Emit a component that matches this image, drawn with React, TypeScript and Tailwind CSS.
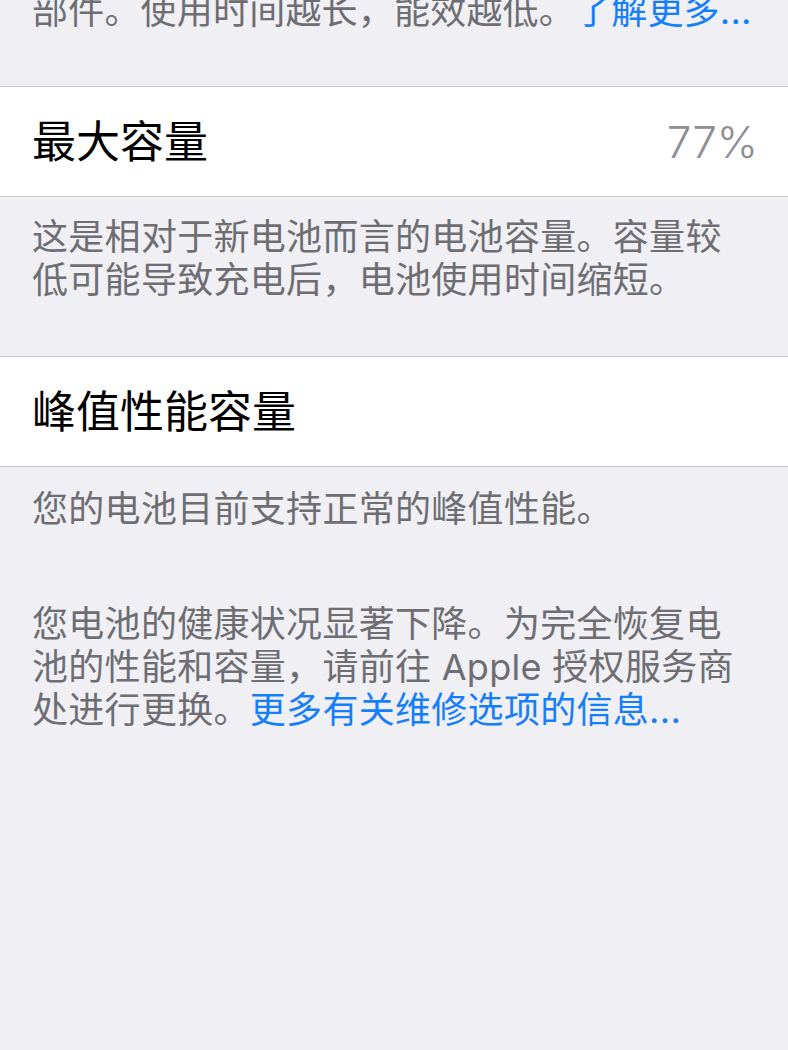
import type { ReactNode } from "react";

const font = "font-['Inter','Noto_Sans_CJK_SC',sans-serif]";

function Footer({ children, className = "" }: { children: ReactNode; className?: string }) {
  return (
    <p className={`pl-[32px] text-[36px] leading-[43px] text-[#6d6d72] ${className}`}>
      {children}
    </p>
  );
}

function Row({ title, value }: { title: string; value?: string }) {
  return (
    <div className="flex h-[111px] items-center justify-between border-y border-[#c8c7cc] bg-white pl-[32px] pr-[30px]">
      <span className="text-[44px] text-black">{title}</span>
      {value && <span className="text-[44px] font-light text-[#8e8e93]">{value}</span>}
    </div>
  );
}

export default function App() {
  return (
    <div className={`min-h-screen overflow-hidden bg-[#efeff4] ${font}`}>
      {/* tail of the previous section's note, scrolled mostly out of view */}
      <Footer className="-mt-[10px] whitespace-nowrap pb-[53px] tracking-[0.2px]">
        部件。使用时间越长，能效越低。<span className="text-[#157efb]">了解更多...</span>
      </Footer>

      <Row title="最大容量" value="77%" />

      <Footer className="pt-[19px] pb-[54px] pr-[40px] tracking-[0.3px]">
        这是相对于新电池而言的电池容量。容量较低可能导致充电后，电池使用时间缩短。
      </Footer>

      <Row title="峰值性能容量" />

      <Footer className="pt-[21px] pr-[40px] tracking-[0.3px]">您的电池目前支持正常的峰值性能。</Footer>

      <Footer className="pt-[72px] pr-[40px] tracking-[0.3px]">
        您电池的健康状况显著下降。为完全恢复电池的性能和容量，请前往 Apple 授权服务商处进行更换。
        <span className="text-[#157efb]">更多有关维修选项的信息...</span>
      </Footer>
    </div>
  );
}
